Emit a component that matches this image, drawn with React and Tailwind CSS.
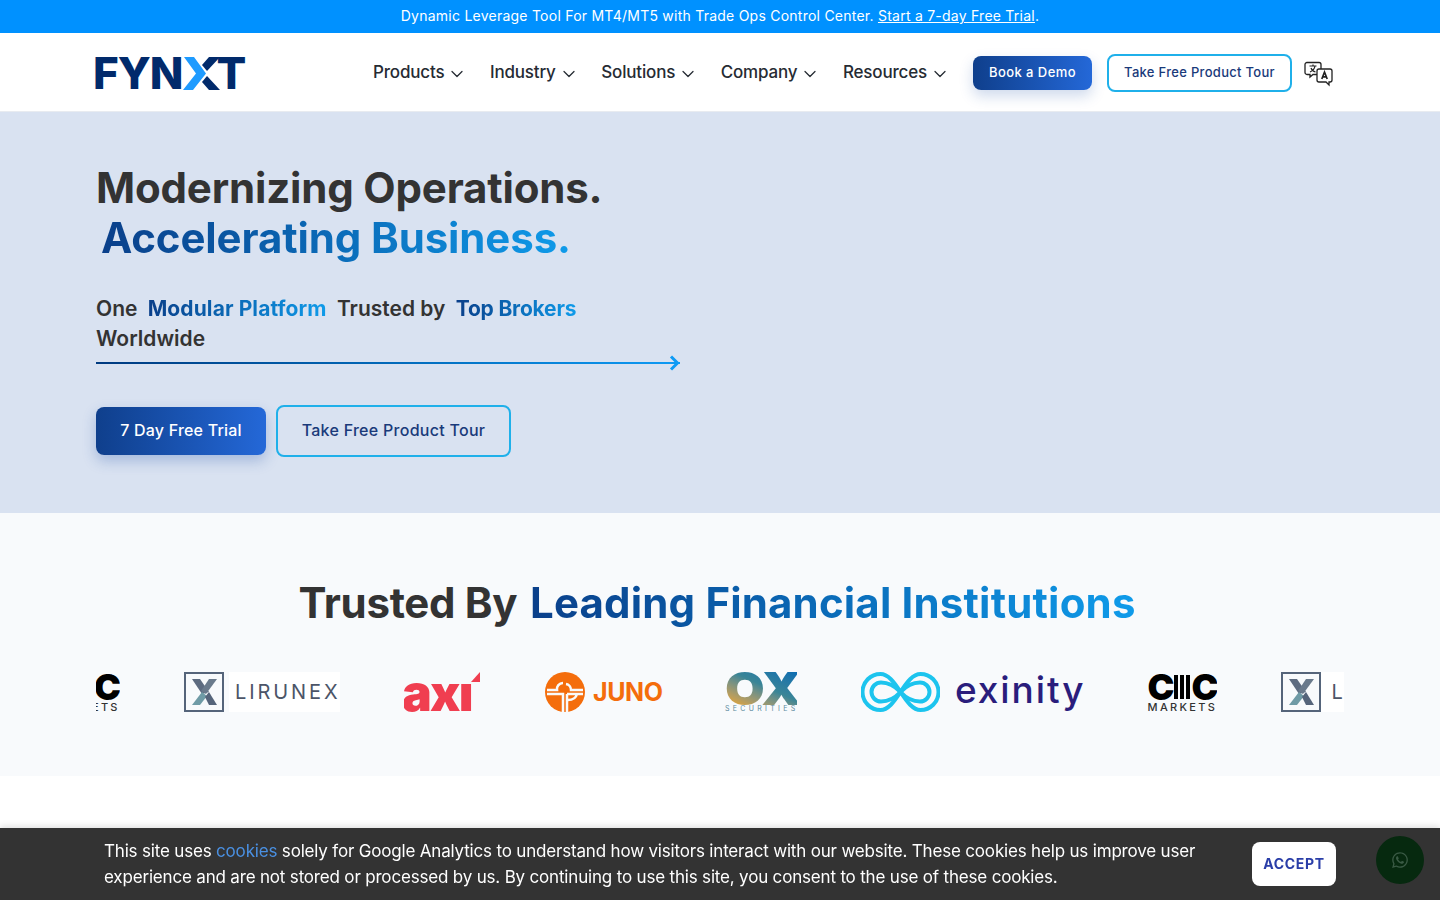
import { ChevronDown } from 'lucide-react';
import { FaWhatsapp } from 'react-icons/fa';

const navItems = ['Products', 'Industry', 'Solutions', 'Company', 'Resources'];

const Grad = ({ children, className = 'from-[#0a3f8a] to-[#0f9bea]' }) => (
    <span className={`bg-linear-to-r ${className} bg-clip-text text-transparent`}>{children}</span>
);

const FynxtLogo = () => (
    <div className="flex items-center h-[34px] -ml-[3px] text-[#012a6b] text-[44px] font-extrabold leading-none tracking-[-1px]">
        <span>FYN</span>
        <svg width="38" height="33" viewBox="0 0 38 33" className="-ml-[1px] -mr-[3px] shrink-0">
            <polygon points="2,0 12,0 24,16.5 11,33 1,33 14,16.5" fill="#1e9bff" />
            <polygon points="38,0 27,0 20,8 25,14" fill="#012a6b" />
            <polygon points="38,33 27,33 20,25 25,19" fill="#012a6b" />
        </svg>
        <span>T</span>
    </div>
);

const TranslateIcon = () => (
    <svg width="30" height="26" viewBox="0 0 30 26" fill="none" stroke="#222" strokeWidth="1.3" className="shrink-0">
        <path d="M3 1.500h12a2 2 0 0 1 2 2v8a2 2 0 0 1-2 2H9l-3 2.500v-2.500H3a2 2 0 0 1-2-2v-8a2 2 0 0 1 2-2z" fill="#fff" />
        <path d="M5.500 5h7M9 3.500V5M11 5c-.5 3-2.500 5-5 6M7 7c.7 2 2.500 3.500 4.500 4" strokeWidth="1.200" />
        <path d="M15 8h11a2 2 0 0 1 2 2v9a2 2 0 0 1-2 2h-1v3l-3-3h-7a2 2 0 0 1-2-2v-9a2 2 0 0 1 2-2z" fill="#fff" />
        <path d="M17.800 18l2.700-7 2.700 7M18.800 15.800h3.400" strokeWidth="1.700" />
    </svg>
);

const LirunexMark = () => (
    <svg width="40" height="40" viewBox="0 0 40 40" className="shrink-0">
        <rect x="1" y="1" width="38" height="38" fill="none" stroke="#55647a" strokeWidth="2" />
        <polygon points="8,7 16,7 25,20 18,22" fill="#5d6b80" />
        <polygon points="33,7 25,7 17,19 22,22" fill="#6a7a8c" />
        <polygon points="18,20 23,24 16,33 8,33" fill="#6f9ba6" />
        <polygon points="21,25 25,20 33,33 25,33" fill="#55647a" />
    </svg>
);

const LirunexLogo = () => (
    <div className="flex items-center h-10 w-[156px] shrink-0">
        <LirunexMark />
        <div className="flex-1 h-10 ml-[5px] bg-white flex items-center overflow-hidden">
            <span className="ml-[6px] text-[20px] font-normal text-[#4c5568] leading-none tracking-[2.900px]">LIRUNEX</span>
        </div>
    </div>
);

const LirunexCut = () => (
    <div className="flex items-center h-10 shrink-0">
        <LirunexMark />
        <div className="w-[24px] h-10 bg-white flex items-center">
            <span className="ml-[10px] text-[20px] text-[#4c5568] leading-none">L</span>
        </div>
    </div>
);

const AxiLogo = () => (
    <div className="relative w-[77px] h-10 shrink-0 flex items-end overflow-hidden">
        <span className="text-[50px] font-black text-[#f03e50] leading-[40px] tracking-[-1.800px] -ml-[2px] -mb-[1px]">axı</span>
        <svg width="9" height="10" viewBox="0 0 9 10" className="absolute right-[1px] top-0">
            <polygon points="9,0 9,10 0,10" fill="#f03e50" />
        </svg>
    </div>
);

const JunoLogo = () => (
    <div className="flex items-center gap-[8px] w-[116px] h-10 shrink-0">
        <svg width="40" height="40" viewBox="0 0 40 40" className="shrink-0">
            <circle cx="20" cy="20" r="20" fill="#f46d0c" />
            <path d="M2 18h10a6 6 0 0 1 6-7M38 18H26a6 6 0 0 0-5-6M2 22h16v18M22 22h16M22 22v18M23 28c5 0 8-2 9-6" stroke="#f8fafc" strokeWidth="2.500" fill="none" />
        </svg>
        <span className="text-[25px] font-bold text-[#f46d0c] leading-none tracking-[-0.4px]">JUNO</span>
    </div>
);

const OxLogo = () => (
    <div className="flex flex-col h-10 w-[72px] shrink-0 overflow-hidden">
        <span className="origin-left scale-x-[1.14] bg-linear-to-tr from-[#f0a500] via-[#3a8596] via-55% to-[#0b6cb2] bg-clip-text text-transparent text-[45px] font-black leading-[33px] w-[64px]">OX</span>
        <span className="text-[7px] leading-[7px] text-[#5d8a9e] tracking-[3.300px] whitespace-nowrap">SECURITIES</span>
    </div>
);

const ExinityLogo = () => (
    <div className="flex items-center gap-[15px] h-10 shrink-0">
        <svg width="79" height="40" viewBox="0 0 79 40" fill="none" stroke="#1cc4ee" className="shrink-0">
            <path d="M39.500 20C33 10 27 2 19.500 2a18 18 0 0 0 0 36c7.500 0 13.500-8 20-18s12.500-18 20-18a18 18 0 0 1 0 36c-7.500 0-13.500-8-20-18z" strokeWidth="4" />
            <path d="M39.500 20C33 13 27 10.500 20 10.500a9.500 9.500 0 0 0 0 19c7 0 13-2.500 19.500-9.500s12.500-9.500 19.500-9.500a9.500 9.500 0 0 1 0 19c-7 0-13-2.500-19.500-9.500z" strokeWidth="4" />
        </svg>
        <span className="text-[37px] font-medium text-[#2a1d7c] leading-none tracking-[1.900px] -mt-[5px] -mr-[2px]">exinity</span>
    </div>
);

const CmcLogo = () => (
    <div className="flex flex-col items-center h-10 w-[70px] shrink-0 overflow-hidden">
        <div className="flex items-center h-[29px] text-black text-[36px] font-black leading-none tracking-[-1px]">
            <span>C</span>
            <span className="flex gap-[2px] h-[24px] mx-[1px]">
                <span className="w-[4px] bg-black" />
                <span className="w-[4px] bg-black" />
                <span className="w-[4px] bg-black" />
            </span>
            <span>C</span>
        </div>
        <span className="mt-[1px] text-[11px] leading-[11px] font-medium text-[#333] tracking-[2.300px] whitespace-nowrap">MARKETS</span>
    </div>
);

const App = () => {
    return (
        <div className="min-h-[900px] bg-white font-['Inter',sans-serif] text-[#333333]">
            <div className="h-[33px] pb-[2px] bg-[#0091ff] text-white text-[14px] tracking-[0.24px] flex items-center justify-center">
                <span>Dynamic Leverage Tool For MT4/MT5 with Trade Ops Control Center. <u>Start a 7-day Free Trial</u>.</span>
            </div>

            <header className="h-[79px] pt-[2px] bg-white border-b border-[#e8ebf0] flex items-center px-24">
                <FynxtLogo />
                <nav className="ml-auto flex items-center gap-[22.5px] text-[17px] font-medium tracking-[-0.17px] text-[#262b33]">
                    {navItems.map((item) => (
                        <div key={item} className="flex items-center gap-[3px]">
                            {item}
                            <ChevronDown size={20} strokeWidth={1.500} className="mt-[2px]" />
                        </div>
                    ))}
                </nav>
                <button className="ml-[23px] w-[119px] h-[34px] rounded-lg bg-linear-to-r from-[#0f3f8c] to-[#2468d8] text-white text-[13px] font-medium tracking-[0.45px] shadow-[0_6px_14px_rgba(30,80,170,0.22)]">Book a Demo</button>
                <button className="ml-[15px] w-[185px] h-[38px] rounded-lg border-2 border-[#1fb0ea] bg-white text-[#1a3a7a] text-[13px] font-medium tracking-[0.3px]">Take Free Product Tour</button>
                <div className="ml-[12px] w-[40px] mt-[2px]"><TranslateIcon /></div>
            </header>

            <section className="h-[401px] bg-[#d9e2f1] px-24 pt-[51px]">
                <h1 className="text-[42px] leading-[50px] font-bold tracking-[-0.17px]">
                    <div>Modernizing Operations.</div>
                    <div className="pl-[5px] tracking-[-0.12px]"><Grad>Accelerating Business.</Grad></div>
                </h1>
                <div className="mt-[31px] w-[584px] text-[21px] leading-[30px] font-semibold">
                    <p>
                        One <span className="ml-[5px]"><Grad className="from-[#0a3f8a] to-[#0f9bea] font-bold tracking-[0.1px]">Modular Platform</Grad></span>{' '}
                        <span className="ml-[5px]">Trusted by</span>{' '}
                        <span className="ml-[5px]"><Grad className="from-[#0a3f8a] to-[#0f9bea] font-bold tracking-[-0.2px]">Top Brokers</Grad></span>
                        <br />Worldwide
                    </p>
                    <div className="relative mt-[8px] h-[2px] bg-linear-to-r from-[#003a80] to-[#0f9bf5]">
                        <svg width="12" height="18" viewBox="0 0 12 18" fill="none" className="absolute right-0 -top-[8px]">
                            <path d="M3 2.500l6.500 6.500-6.500 6.500" stroke="#0f9bf5" strokeWidth="3" />
                        </svg>
                    </div>
                </div>
                <div className="mt-[41px] flex items-center gap-[10px]">
                    <button className="w-[170px] h-[48px] pb-[2px] rounded-lg bg-linear-to-r from-[#0f3f8c] to-[#2468d8] text-white text-[16px] font-medium tracking-[0.2px] shadow-[0_6px_14px_rgba(30,80,170,0.28)]">7 Day Free Trial</button>
                    <button className="w-[235px] h-[52px] pb-[2px] rounded-lg border-2 border-[#1fb0ea] text-[#1a3a7a] text-[16px] font-medium tracking-[0.28px]">Take Free Product Tour</button>
                </div>
            </section>

            <section className="h-[263px] bg-[#f8fafc] px-24 pt-[65px]">
                <h2 className="text-[42px] leading-[50px] font-bold tracking-[-0.3px] text-center pr-[6px]">
                    Trusted By <span className="ml-[3px] tracking-[0.17px]"><Grad>Leading Financial Institutions</Grad></span>
                </h2>
                <div className="mt-[44px] overflow-hidden">
                    <div className="flex items-center gap-[64px] -ml-[46px]">
                        <CmcLogo />
                        <LirunexLogo />
                        <AxiLogo />
                        <JunoLogo />
                        <OxLogo />
                        <ExinityLogo />
                        <CmcLogo />
                        <LirunexCut />
                    </div>
                </div>
            </section>

            <div className="fixed bottom-0 inset-x-0 h-[72px] bg-[#333333] shadow-[0_-2px_6px_rgba(0,0,0,0.12)] flex items-center pl-[104px] pr-[104px]">
                <p className="flex-1 -mt-[1px] text-white text-[17px] leading-[26px] tracking-[-0.18px]">
                    This site uses <span className="text-[#4a90e2]">cookies</span> solely for Google Analytics to understand how visitors interact with our website. These cookies help us improve user experience and are not stored or processed by us. By continuing to use this site, you consent to the use of these cookies.
                </p>
                <button className="ml-[40px] w-[84px] h-[44px] pb-[2px] rounded-lg bg-white text-[#2a3ea8] text-[14px] font-bold tracking-[0.7px]">ACCEPT</button>
            </div>
            <div className="fixed right-[16px] bottom-[16px] w-12 h-12 rounded-full bg-[#06290f] flex items-center justify-center">
                <FaWhatsapp size={18} className="text-[#3a5a45]" />
            </div>
        </div>
    );
};

export default App;
